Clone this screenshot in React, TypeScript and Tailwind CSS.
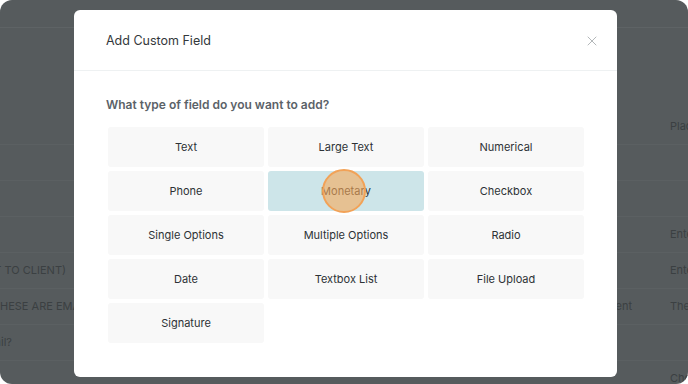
import { X } from "lucide-react"

const fields = [
  "Text",
  "Large Text",
  "Numerical",
  "Phone",
  "Monetary",
  "Checkbox",
  "Single Options",
  "Multiple Options",
  "Radio",
  "Date",
  "Textbox List",
  "File Upload",
  "Signature",
]

// dimmed page rows behind the modal
const rows = [
  { left: "", pad: "pr-[8px]", mid: "", right: "Placeholder" },
  { left: "", pad: "pr-[8px]", mid: "", right: "" },
  { left: "", pad: "pr-[8px]", mid: "", right: "" },
  { left: "", pad: "pr-[8px]", mid: "", right: "Enter" },
  { left: "T TO CLIENT)", pad: "pr-[8px]", mid: "", right: "Enter" },
  { left: "HESE ARE EMAILS", pad: "", mid: "ent", right: "The" },
  { left: "ail?", pad: "pr-[62px]", mid: "", right: "" },
  { left: "", pad: "pr-[8px]", mid: "", right: "Choose" },
]

export default function App() {
  return (
    <div className="w-[688px] h-[384px] bg-white font-['Inter',sans-serif]">
      <div className="relative h-full overflow-hidden rounded-[12px] bg-[#565b5d] text-[11px] text-[#3b4042]">
        <div className="h-[28px] border-b border-[#5e6365]" />
        <div className="h-[81px]" />
        {rows.map((r, i) => (
          <div key={i} className="flex h-[36px] items-center border-b border-[#5b6062]">
            <div
              className={`flex w-[74px] shrink-0 overflow-hidden whitespace-nowrap ${
                r.pad === "" ? "justify-start" : "justify-end"
              } ${r.pad}`}
            >
              {r.left}
            </div>
            <div className="flex w-[558px] shrink-0 justify-end whitespace-nowrap">{r.mid}</div>
            <div className="ml-[38px] shrink-0 whitespace-nowrap">{r.right}</div>
          </div>
        ))}

        <div className="absolute left-[74px] top-[10px] h-[367px] w-[543px] rounded-[6px] bg-white">
          <div className="flex h-[61px] items-center justify-between border-b border-[#eef1f2] pl-[32px] pr-[17px] pt-[2px]">
            <h2 className="text-[12.5px] text-[#33383b]">Add Custom Field</h2>
            <X className="h-[16px] w-[16px] text-[#a7abae]" strokeWidth={1.3} />
          </div>
          <div className="pl-[32px] pr-[33px] pt-[26px]">
            <p className="mb-[14px] text-[12px] font-semibold leading-[16px] text-[#5b6268]">
              What type of field do you want to add?
            </p>
            <div className="ml-[2px] grid grid-cols-3 gap-[4px]">
              {fields.map((f) => (
                <div
                  key={f}
                  className={`relative flex h-[40px] items-center justify-center rounded-[3px] text-[11px] text-[#2d3236] ${
                    f === "Monetary" ? "bg-[#cde5e9]" : "bg-[#f8f8f8]"
                  }`}
                >
                  {f}
                  {f === "Monetary" && (
                    <span className="absolute left-[54px] top-[-2px] h-[44px] w-[44px] rounded-full border-2 border-[#f2a257] bg-[rgba(247,168,88,0.6)]" />
                  )}
                </div>
              ))}
            </div>
          </div>
        </div>
      </div>
    </div>
  )
}
